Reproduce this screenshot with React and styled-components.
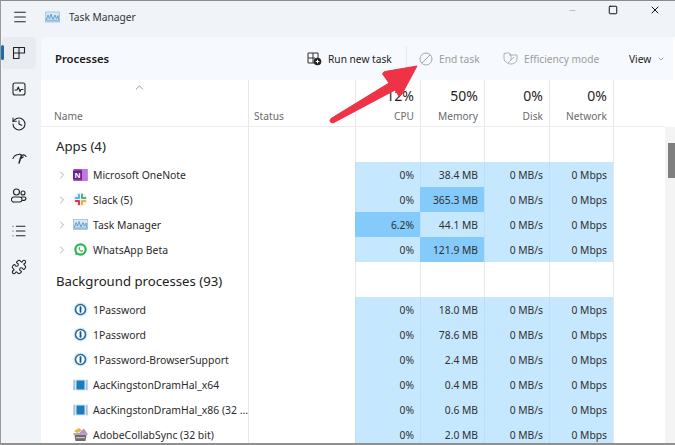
import React from 'react';
import styled, { createGlobalStyle } from 'styled-components';
import { History, List, Puzzle, ChevronRight, ChevronDown, ChevronUp, X, Square, Minus, Menu } from 'lucide-react';

const Global = createGlobalStyle`
  html, body { margin: 0; padding: 0; background: #fff; }
  body { font-family: "Noto Sans", "Open Sans", Arial, sans-serif; color: #1b1b1b; }
  #root { width: 675px; height: 445px; overflow: hidden; }
`;

const Window = styled.div`
  position: relative;
  box-sizing: border-box;
  width: 675px;
  height: 445px;
  overflow: hidden;
  background: #f0f4f9;
  border-top: 1px solid #8d8d8d;
  border-left: 1px solid #9a9a9a;
  border-bottom: 2px solid #8f8f8f;
  display: flex;
  flex-direction: column;
`;

const TitleBar = styled.div`
  height: 36px;
  flex: none;
  box-sizing: border-box;
  display: flex;
  align-items: center;
  padding: 0 0 5px 11px;
  font-size: 10.2px;
  color: #333;
`;
const Hamburger = styled.span`
  display: flex;
  width: 33px;
  color: #222;
`;
const AppTitle = styled.span`
  margin-left: 9px;
`;
const WindowControls = styled.div`
  margin-left: auto;
  display: flex;
  align-items: center;
  height: 18px;
  align-self: flex-start;
  padding: 0 14px 0 0;
  gap: 31px;
  color: #111;
`;
const Control = styled.span`
  display: flex;
  opacity: ${p => (p.$faint ? 0.3 : 1)};
`;

const Body = styled.div`
  flex: 1;
  min-height: 0;
  display: flex;
`;
const Sidebar = styled.nav`
  width: 40px;
  flex: none;
  display: flex;
  flex-direction: column;
  gap: 4px;
  padding-right: 5px;
  box-sizing: border-box;
`;
const NavItem = styled.div`
  position: relative;
  height: 31.7px;
  flex: none;
  display: flex;
  align-items: center;
  justify-content: center;
  margin-left: 1px;
  border-radius: 4px;
  color: #222;
  background: ${p => (p.$active ? '#e8ecf0' : 'transparent')};
  &::before {
    content: ${p => (p.$active ? '""' : 'none')};
    position: absolute;
    left: -1px;
    top: 8px;
    width: 2.5px;
    height: 15px;
    border-radius: 2px;
    background: #1a6ea8;
  }
`;

const Main = styled.main`
  flex: 1;
  min-width: 0;
  display: flex;
  flex-direction: column;
  background: #fff;
  border-top-left-radius: 6px;
`;
const Toolbar = styled.div`
  height: 43px;
  flex: none;
  margin-right: 2px;
  background: #f6f9fd;
  border-top-left-radius: 6px;
  display: flex;
  align-items: center;
  padding-left: 14px;
`;
const PageTitle = styled.h1`
  margin: 0;
  font-size: 11.3px;
  font-weight: 600;
  color: #1a1a1a;
  margin-right: auto;
`;
const ToolButton = styled.div`
  display: flex;
  align-items: center;
  gap: ${p => p.$gap || 6}px;
  width: ${p => p.$width}px;
  font-size: 10.2px;
  color: ${p => (p.$disabled ? '#9c9c9c' : '#1e1e1e')};
`;
const Divider = styled.span`
  width: 1px;
  height: 26px;
  background: #e6e8ea;
  margin: 0 12px 0 0;
`;

const Content = styled.div`
  flex: 1;
  min-height: 0;
  display: flex;
`;
const Table = styled.div`
  flex: 1;
  min-width: 0;
`;
const ScrollTrack = styled.div`
  width: 10px;
  flex: none;
  margin-top: 47px;
  background: #f4f4f4;
  display: flex;
  justify-content: flex-end;
`;
const ScrollThumb = styled.div`
  width: 7px;
  height: 35px;
  margin-top: 16px;
  background: #7f7f7f;
`;

const COLS = '207px 107px 65px 64px 65px 64px 1fr';

const HeaderRow = styled.div`
  display: grid;
  grid-template-columns: ${COLS};
  height: 47px;
  border-bottom: 1px solid #ebebeb;
  box-sizing: border-box;
`;
const HeadCell = styled.div`
  position: relative;
  box-sizing: border-box;
  display: flex;
  flex-direction: column;
  justify-content: flex-end;
  align-items: ${p => (p.$right ? 'flex-end' : 'flex-start')};
  padding: 0 6px 2px 5px;
  border-left: ${p => (p.$first ? 'none' : '1px solid #e8e8e8')};
  font-size: 10.2px;
  color: #6b6b6b;
`;
const HeadPct = styled.div`
  font-size: 14px;
  line-height: 18px;
  color: #1f1f1f;
  margin-bottom: 4px;
`;
const HeadLabel = styled.div`
  line-height: 15px;
  margin-left: ${p => p.$inset || 0}px;
`;
const SortCaret = styled.span`
  position: absolute;
  left: 92px;
  top: 1px;
  display: flex;
  color: #777;
`;

const Row = styled.div`
  display: grid;
  grid-template-columns: ${COLS};
  height: ${p => p.$h || 25}px;
`;
const SectionName = styled.div`
  display: flex;
  align-items: center;
  padding: 3px 0 0 15px;
  font-size: 13.2px;
  color: #222;
`;
const NameCell = styled.div`
  display: flex;
  align-items: center;
  padding-left: 15px;
  font-size: 10.4px;
  color: #2a2a2a;
  white-space: nowrap;
  overflow: hidden;
`;
const Chevron = styled.span`
  width: 17px;
  flex: none;
  display: flex;
  color: #888;
  visibility: ${p => (p.$show ? 'visible' : 'hidden')};
`;
const AppIcon = styled.span`
  width: 20px;
  flex: none;
  display: flex;
  align-items: center;
`;
const Cell = styled.div`
  border-left: 1px solid #e8e8e8;
`;
const DataCell = styled.div`
  box-sizing: border-box;
  display: flex;
  align-items: center;
  justify-content: flex-end;
  padding-right: 6px;
  font-size: 10.3px;
  color: #303030;
  border-left: 1px solid ${p => (p.$hot ? '#84cbfb' : '#bddff5')};
  background: ${p => (p.$hot ? '#84cbfb' : '#c6e8fe')};
`;

const Arrow = styled.svg`
  position: absolute;
  left: 0;
  top: -1px;
  pointer-events: none;
`;

const sw = { fill: 'none', stroke: 'currentColor', strokeWidth: 1.1, strokeLinecap: 'round', strokeLinejoin: 'round' };

const ProcessesIcon = () => (
  <svg width="14" height="14" viewBox="0 0 14 14" {...sw}>
    <path d="M1.5 1.5H12.5V7H7V12.5H1.5ZM1.5 7H7V1.5" />
  </svg>
);
const PerfIcon = () => (
  <svg width="14" height="14" viewBox="0 0 14 14" {...sw}>
    <rect x="1" y="1" width="12" height="12" rx="2" />
    <path d="M3 8H5L6.3 5L8 9.5L9 7.5H11" />
  </svg>
);
const StartupIcon = () => (
  <svg width="15" height="14" viewBox="0 0 15 14" {...sw} style={{ marginTop: -4 }}>
    <path d="M1 7.5C2 5 4 3.5 7 3.5" />
    <path d="M7.5 3L10 4.5C11.5 3.5 13 4 14 5.5" />
    <path d="M9.5 4.5L7 12M11 6L8 8" strokeWidth="1.5" />
  </svg>
);
const UsersIcon = () => (
  <svg width="16" height="15" viewBox="0 0 16 15" {...sw}>
    <circle cx="5.5" cy="4" r="3" />
    <circle cx="12" cy="5" r="2" />
    <path d="M2.5 9H8.5A2 2 0 0 1 8.5 14H3.5A2.5 2.5 0 0 1 2.5 9Z" />
    <path d="M10.5 9H13.5Q15 9 15 10.5Q15 12.5 11.5 12.5" />
  </svg>
);
const TaskIcon = ({ w = 15, h = 11 }) => (
  <svg width={w} height={h} viewBox="0 0 15 11">
    <rect x="0.5" y="0.5" width="14" height="10" fill="#d6e8f6" stroke="#9fc0da" strokeWidth="0.8" />
    <path d="M1 9L3 3.5L4.5 7L6 2.5L8 8L10 3.5L11.5 7L13 4L14 9" fill="#bcd8ee" stroke="#4f93c6" strokeWidth="0.8" />
    <rect x="1" y="8.5" width="13" height="1.5" fill="#8fbfe0" />
  </svg>
);
const OneNoteIcon = () => (
  <svg width="15" height="14" viewBox="0 0 15 14">
    <rect x="0.5" y="1" width="14" height="12" fill="#a24fc3" />
    <rect x="9" y="1" width="5.5" height="12" fill="#c377dd" />
    <rect x="0" y="2.5" width="9" height="9" fill="#6b1f93" />
    <text x="4.5" y="10" textAnchor="middle" fontSize="7.5" fontWeight="700" fill="#fff" fontFamily="Noto Sans, sans-serif">N</text>
  </svg>
);
const SlackIcon = () => (
  <svg width="15" height="15" viewBox="0 0 15 15">
    <circle cx="7.5" cy="7.5" r="7" fill="#f8efe4" />
    <g strokeWidth="2" strokeLinecap="round">
      <path d="M6 2.8V6" stroke="#43bde6" />
      <path d="M2.8 6H5" stroke="#43bde6" />
      <path d="M9 2.5V6" stroke="#3fb58b" />
      <path d="M10 6H12.2" stroke="#3fb58b" />
      <path d="M9 9H12.2" stroke="#e9b245" />
      <path d="M9 10V12.3" stroke="#e9b245" />
      <path d="M6 9V12.3" stroke="#d8326a" />
      <path d="M2.8 9H5" stroke="#d8326a" />
    </g>
  </svg>
);
const WhatsAppIcon = () => (
  <svg width="15" height="15" viewBox="0 0 15 15">
    <circle cx="7.5" cy="7.5" r="6.2" fill="#2db84f" />
    <path d="M2.2 13.2L3 9.5L5.5 12Z" fill="#2db84f" />
    <circle cx="7.5" cy="7.5" r="4" fill="#fff" />
    <path d="M5.6 5.4L6.6 5L7.2 6.4L6.6 7.1C7 7.9 7.6 8.4 8.3 8.7L9 8L10.2 8.7L9.9 9.6C8 10.2 5 7.6 5.6 5.4Z" fill="#2db84f" />
  </svg>
);
const OnePassIcon = () => (
  <svg width="15" height="15" viewBox="0 0 15 15">
    <circle cx="7.5" cy="7.5" r="7" fill="#d6e9f7" />
    <circle cx="7.5" cy="7.5" r="5" fill="#fff" stroke="#1f6ea8" strokeWidth="1.6" />
    <rect x="6.6" y="4.2" width="1.8" height="6.5" rx="0.6" fill="#1c4f82" />
  </svg>
);
const AacIcon = () => (
  <svg width="15" height="12" viewBox="0 0 15 12">
    <rect x="0" y="0.5" width="15" height="11" fill="#d2e6f3" />
    <rect x="0.5" y="1" width="1.5" height="10" fill="#a6c4d8" />
    <rect x="13" y="1" width="1.5" height="10" fill="#a6c4d8" />
    <rect x="3.5" y="1.5" width="8" height="9" fill="#1b7cc0" />
  </svg>
);
const AdobeIcon = () => (
  <svg width="15" height="15" viewBox="0 0 15 15">
    <path d="M1 4L6 1L9 3.5L4 6Z" fill="#e9b93c" />
    <path d="M6 6L11 1.5L14 6Z" fill="#c58bd6" />
    <rect x="0.5" y="6" width="14" height="2" fill="#b3a6b6" />
    <path d="M1.5 8H13.5L12.5 14H2.5Z" fill="#6f6a70" />
    <rect x="3" y="10" width="9" height="1.2" fill="#c9c5ca" />
  </svg>
);

const RunTaskIcon = () => (
  <svg width="15" height="15" viewBox="0 0 15 15">
    <path d="M1 2H11V7M6 2V12M1 7H8M1 2V12H7" fill="none" stroke="#333" strokeWidth="1" />
    <circle cx="10.5" cy="10.5" r="3.8" fill="#222" />
    <path d="M8.7 10.5H12.3M10.5 8.7V12.3" stroke="#fff" strokeWidth="1" />
  </svg>
);
const EndIcon = () => (
  <svg width="14" height="14" viewBox="0 0 14 14" fill="none" stroke="#a8a8a8" strokeWidth="1">
    <circle cx="7" cy="7" r="6" />
    <path d="M2.8 11.2L11.2 2.8" />
  </svg>
);
const LeafIcon = () => (
  <svg width="15" height="13" viewBox="0 0 15 13" fill="none" stroke="#b0b0b0" strokeWidth="1">
    <path d="M1 1.5L5.5 0.8L8 2.5L8 6.5C8 9 6 10.5 4.5 11C2.5 10 1 8.5 1 6Z" />
    <path d="M6 3H14V7C14 10 11 12 8 12C6.5 12 5.5 11.5 5 11" />
    <path d="M7 9L11 5" />
  </svg>
);

const rowsApps = [
  { icon: <OneNoteIcon />, name: 'Microsoft OneNote', cpu: '0%', mem: '38.4 MB' },
  { icon: <SlackIcon />, name: 'Slack (5)', cpu: '0%', mem: '365.3 MB', memHot: true },
  { icon: <TaskIcon />, name: 'Task Manager', cpu: '6.2%', mem: '44.1 MB', cpuHot: true },
  { icon: <WhatsAppIcon />, name: 'WhatsApp Beta', cpu: '0%', mem: '121.9 MB', memHot: true },
];
const rowsBg = [
  { icon: <OnePassIcon />, name: '1Password', cpu: '0%', mem: '18.0 MB' },
  { icon: <OnePassIcon />, name: '1Password', cpu: '0%', mem: '78.6 MB' },
  { icon: <OnePassIcon />, name: '1Password-BrowserSupport', cpu: '0%', mem: '2.4 MB' },
  { icon: <AacIcon />, name: 'AacKingstonDramHal_x64', cpu: '0%', mem: '0.4 MB' },
  { icon: <AacIcon />, name: 'AacKingstonDramHal_x86 (32 ...', cpu: '0%', mem: '0.6 MB' },
  { icon: <AdobeIcon />, name: 'AdobeCollabSync (32 bit)', cpu: '0%', mem: '2.0 MB' },
];

const Section = ({ title }) => (
  <Row $h={35}>
    <SectionName>{title}</SectionName>
    <Cell /><Cell /><Cell /><Cell /><Cell /><Cell />
  </Row>
);

const ProcessRow = ({ r, expand }) => (
  <Row>
    <NameCell>
      <Chevron $show={expand}><ChevronRight size={12} strokeWidth={1.3} /></Chevron>
      <AppIcon>{r.icon}</AppIcon>
      {r.name}
    </NameCell>
    <Cell />
    <DataCell $hot={r.cpuHot}>{r.cpu}</DataCell>
    <DataCell $hot={r.memHot}>{r.mem}</DataCell>
    <DataCell>0 MB/s</DataCell>
    <DataCell>0 Mbps</DataCell>
    <Cell />
  </Row>
);

export default function App() {
  return (
    <>
      <Global />
      <Window>
        <TitleBar>
          <Hamburger><Menu size={16} strokeWidth={1.6} /></Hamburger>
          <TaskIcon w={15} h={12} />
          <AppTitle>Task Manager</AppTitle>
          <WindowControls>
            <Control $faint><Minus size={9} strokeWidth={2} /></Control>
            <Control><Square size={10} strokeWidth={2.4} /></Control>
            <Control><X size={12} strokeWidth={2} /></Control>
          </WindowControls>
        </TitleBar>
        <Body>
          <Sidebar>
            <NavItem $active><ProcessesIcon /></NavItem>
            <NavItem><PerfIcon /></NavItem>
            <NavItem><History size={16} strokeWidth={1.6} /></NavItem>
            <NavItem><StartupIcon /></NavItem>
            <NavItem><UsersIcon /></NavItem>
            <NavItem><List size={16} strokeWidth={1.6} /></NavItem>
            <NavItem><Puzzle size={16} strokeWidth={1.6} /></NavItem>
          </Sidebar>
          <Main>
            <Toolbar>
              <PageTitle>Processes</PageTitle>
              <ToolButton $width={99}><RunTaskIcon />Run new task</ToolButton>
              <Divider />
              <ToolButton $disabled $width={84}><EndIcon />End task</ToolButton>
              <ToolButton $disabled $width={126}><LeafIcon />Efficiency mode</ToolButton>
              <ToolButton $width={44}>View<ChevronDown size={8} color="#777" /></ToolButton>
            </Toolbar>
            <Content>
              <Table>
                <HeaderRow>
                  <HeadCell $first>
                    <SortCaret><ChevronUp size={13} strokeWidth={1.4} /></SortCaret>
                    <HeadLabel $inset={8}>Name</HeadLabel>
                  </HeadCell>
                  <HeadCell><HeadLabel>Status</HeadLabel></HeadCell>
                  <HeadCell $right><HeadPct>12%</HeadPct><HeadLabel>CPU</HeadLabel></HeadCell>
                  <HeadCell $right><HeadPct>50%</HeadPct><HeadLabel>Memory</HeadLabel></HeadCell>
                  <HeadCell $right><HeadPct>0%</HeadPct><HeadLabel>Disk</HeadLabel></HeadCell>
                  <HeadCell $right><HeadPct>0%</HeadPct><HeadLabel>Network</HeadLabel></HeadCell>
                  <HeadCell />
                </HeaderRow>
                <Section title="Apps (4)" />
                {rowsApps.map(r => <ProcessRow key={r.name} r={r} expand />)}
                <Section title="Background processes (93)" />
                {rowsBg.map((r, i) => <ProcessRow key={i} r={r} />)}
              </Table>
              <ScrollTrack><ScrollThumb /></ScrollTrack>
            </Content>
          </Main>
        </Body>
        <Arrow width="675" height="445" viewBox="0 0 675 445">
          <path
            d="M416 66L384 71.5Q380 73 383 76L388 83L330 118.5Q327 122 332 123L394 90L397.5 95.5Q399 97 401 94Z"
            fill="#ef3347"
            stroke="#ef3347"
            strokeWidth="1"
            strokeLinejoin="round"
          />
        </Arrow>
      </Window>
    </>
  );
}
